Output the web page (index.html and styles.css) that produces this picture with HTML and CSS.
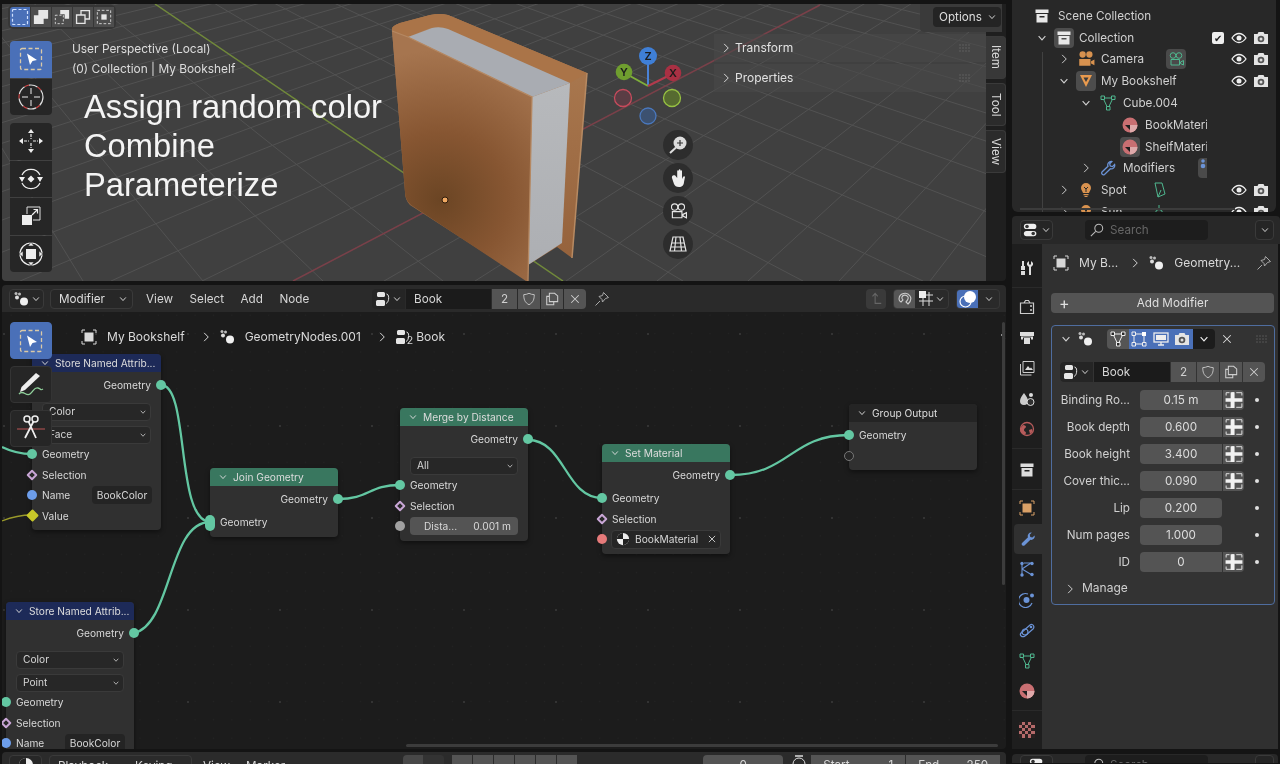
FILE: index.html
```html
<!DOCTYPE html>
<html lang="en">
<head>
<meta charset="utf-8">
<title>Blender Geometry Nodes</title>
<link rel="stylesheet" href="styles.css">
</head>
<body>
<svg class="defs" width="0" height="0" aria-hidden="true">
  <defs>
    <symbol id="down" viewBox="0 0 16 16"><path d="M3.5 5.5 8 10.5l4.5-5" fill="none" stroke="currentColor" stroke-width="1.5"/></symbol>
    <symbol id="right" viewBox="0 0 16 16"><path d="M5.5 2.5 11 8l-5.5 5.5" fill="none" stroke="currentColor" stroke-width="1.3"/></symbol>
    <symbol id="cross" viewBox="0 0 16 16"><path d="M3 3l10 10M13 3 3 13" fill="none" stroke="currentColor" stroke-width="1.4"/></symbol>
    <symbol id="object" viewBox="0 0 16 16"><path d="M1 4V1h3M12 1h3v3M15 12v3h-3M4 15H1v-3" fill="none" stroke="currentColor"/><rect x="3.5" y="3.5" width="9" height="9" fill="currentColor"/></symbol>
    <symbol id="geo" viewBox="0 0 16 16"><circle cx="3" cy="2.5" r="1.5" fill="#bbb"/><circle cx="6.5" cy="3" r="1.5" fill="#bbb"/><circle cx="4" cy="6.5" r="2" fill="#ddd"/><circle cx="11" cy="10.5" r="4" fill="#f0f0f0"/></symbol>
    <symbol id="group" viewBox="0 0 16 16"><rect x="2" y="1" width="8" height="5" rx="1.5" fill="#e6e6e6"/><rect x="1" y="9" width="9" height="6" rx="1.5" fill="#e6e6e6"/><path d="M11.5 3c3 0 3 8-.5 9.5" fill="none" stroke="#e6e6e6"/></symbol>
    <symbol id="shield" viewBox="0 0 16 16"><path d="M8 1.5c2 1 4 1.5 6 1.500 0 5-1 9-6 11.500C3 12 2 8 2 3c2 0 4-.5 6-1.500z" fill="none" stroke="currentColor"/></symbol>
    <symbol id="copy" viewBox="0 0 16 16"><path d="M5 1.5h6l3.5 3V11H5zM5 5H2v9.500h8V11" fill="none" stroke="currentColor" stroke-width="1.200"/></symbol>
    <symbol id="pin" viewBox="0 0 16 16"><path d="M9.5 1.5 14.5 6.500 11.500 7.500 8.500 11 8 8.500 5 5.500 8.500 4.500zM6 10l-4.500 4.500" fill="none" stroke="currentColor"/></symbol>
    <symbol id="box" viewBox="0 0 16 16"><path d="M1.5 1.5h13V5h-13zM2.500 6h11v8.500h-11zM5.500 8v1.500h5V8z" fill="currentColor" fill-rule="evenodd"/></symbol>
    <symbol id="eye" viewBox="0 0 16 16"><path d="M1 8s3-4.500 7-4.500S15 8 15 8s-3 4.500-7 4.500S1 8 1 8z" fill="none" stroke="#eee" stroke-width="1.300"/><circle cx="8" cy="8" r="2.500" fill="#eee"/></symbol>
    <symbol id="render" viewBox="0 0 16 16"><path d="M1 4h3.500l1-2h5l1 2H15v10H1z" fill="#e4e4e4"/><circle cx="8" cy="9" r="3.300" fill="#555"/><circle cx="8" cy="9" r="1.500" fill="#ddd"/></symbol>
    <symbol id="camera" viewBox="0 0 16 16"><circle cx="5" cy="4" r="2.800" fill="currentColor"/><circle cx="11" cy="4" r="2.800" fill="currentColor"/><path d="M2 8h10v6H2zM12.500 10l3-1.500v5l-3-1.500z" fill="currentColor"/></symbol>
    <symbol id="camline" viewBox="0 0 16 16"><circle cx="5" cy="4.500" r="2.800" fill="none" stroke="currentColor"/><circle cx="11" cy="4.500" r="2.800" fill="none" stroke="currentColor"/><path d="M3 8.500h8.500V14H3zM12.500 11l3-1.500V14l-3-1.500z" fill="none" stroke="currentColor"/></symbol>
    <symbol id="mesh" viewBox="0 0 16 16"><path d="M3 3h10L8.500 12.500h-1z" fill="none" stroke="currentColor"/><path d="M1 1h3.500v3.500H1zM11.500 1H15v3.500h-3.500zM6.500 11.500H10V15H6.500z" fill="#282828" stroke="currentColor"/></symbol>
    <symbol id="mat" viewBox="0 0 16 16"><circle cx="8" cy="8" r="7.500" fill="#c96f72"/><path d="M8 8h7.500A7.500 7.500 0 0 1 8 15.500z" fill="#dfa9aa"/><path d="M3 8h5v5z" fill="#1f1f1f"/></symbol>
    <symbol id="matw" viewBox="0 0 16 16"><circle cx="8" cy="8" r="7" fill="#eee"/><path d="M8 8h7a7 7 0 0 1-7 7zM8 8V1a7 7 0 0 0-7 7z" fill="#222"/></symbol>
    <symbol id="wrench" viewBox="0 0 16 16"><path d="M11.5 1.500A3.500 3.500 0 0 0 8 6.300L2 12a1.800 1.800 0 0 0 2.500 2.500l5.900-5.700a3.500 3.500 0 0 0 4.200-4.300L12.400 6.600 10.300 6l-.6-2.200 2.100-2.200z" fill="none" stroke="currentColor" stroke-width="1.300"/></symbol>
    <symbol id="wrenchf" viewBox="0 0 16 16"><path d="M11.5 1.500A3.500 3.500 0 0 0 8 6.300L2 12a1.800 1.800 0 0 0 2.500 2.500l5.900-5.700a3.500 3.500 0 0 0 4.200-4.300L12.400 6.600 10.300 6l-.6-2.200 2.100-2.200z" fill="currentColor"/></symbol>
    <symbol id="bulb" viewBox="0 0 16 16"><path d="M3 6a5 5 0 0 1 10 0c0 2-1.500 3-2 5H5c-.5-2-2-3-2-5z" fill="currentColor"/><path d="M5.5 12h5v1.300h-5zM6.500 14h3v1h-3z" fill="currentColor"/><path d="M6 5l2 2 2-2M8 7v3" stroke="#282828" fill="none"/></symbol>
    <symbol id="attr" viewBox="0 0 16 16"><path d="M1 4V1.500h3M6 1.500h2M10 1.500h5V4M15 11v3.500h-5M6 14.500H1V12" fill="none" stroke="#eee" stroke-width=".8"/><path d="M.5 6.500H5V1h3.500v5.500h7v3h-7V15H5V9.500H.5z" fill="#f2f2f2"/></symbol>
    <symbol id="grip" viewBox="0 0 12 8"><path d="M.5 1h11M.5 4h11M.5 7h11" stroke="#777" stroke-dasharray="1 2" fill="none"/></symbol>
    <symbol id="select" viewBox="0 0 24 24"><rect x="1.500" y="1.500" width="21" height="21" rx="1.500" fill="none" stroke="currentColor" stroke-width="1.300" stroke-dasharray="4 2.500"/><path d="M8 6.500 18 13l-4.500 1L11 18z" fill="#fff"/></symbol>
    <symbol id="cursor" viewBox="0 0 26 26"><circle cx="13" cy="13" r="12" fill="none" stroke="#ddd" stroke-width="1.200" stroke-dasharray="9 4.500"/><circle cx="13" cy="13" r="12" fill="none" stroke="#c44" stroke-width="1.200" stroke-dasharray="4.500 9" stroke-dashoffset="-9"/><path d="M13 4v6M13 16v6M4 13h6M16 13h6" stroke="#eee"/></symbol>
    <symbol id="move" viewBox="0 0 26 26"><path d="M13 1l3 4h-6zM13 25l-3-4h6zM1 13l4-3v6zM25 13l-4 3v-6z" fill="#eee"/><path d="M13 6v5M13 15v5M6 13h5M15 13h5" stroke="#eee" stroke-width="1.200" stroke-dasharray="3 1"/></symbol>
    <symbol id="rotate" viewBox="0 0 26 26"><path d="M4 9a10 10 0 0 1 18 0M22 17a10 10 0 0 1-18 0" fill="none" stroke="#eee" stroke-width="1.200"/><path d="M13 9.500l3.500 3.500-3.500 3.500L9.500 13zM1 11h6l-3 5zM25 11h-6l3 5z" fill="#eee"/></symbol>
    <symbol id="scale" viewBox="0 0 22 22"><rect x="2" y="10" width="10" height="10" fill="#eee"/><path d="M7 9V2h13v13h-7" fill="none" stroke="#ddd"/><path d="M12 10l5-5M13.500 4.500h4v4" fill="none" stroke="#eee" stroke-width="1.200"/></symbol>
    <symbol id="xform" viewBox="0 0 26 26"><circle cx="13" cy="13" r="11" fill="none" stroke="#eee" stroke-width="1.200"/><rect x="8" y="8" width="10" height="10" fill="#eee"/><path d="M13 1l3 4h-6zM13 25l-3-4h6zM1 13l4-3v6zM25 13l-4 3v-6z" fill="#eee" stroke="#262626" stroke-width=".6"/></symbol>
    <symbol id="annot" viewBox="0 0 30 30"><path d="M20 3l4 3L9 20l-5 2 1.500-5z" fill="#eee"/><path d="M3 24c4-5 7 3 11 0s4-7 8-6 2 3 5 1" fill="none" stroke="#8fcf9a" stroke-width="1.300"/></symbol>
    <symbol id="cut" viewBox="0 0 30 30"><path d="M1 15h28" stroke="#b55" stroke-width="1.200"/><circle cx="11" cy="5" r="3" fill="none" stroke="#eee" stroke-width="1.500"/><circle cx="19" cy="5" r="3" fill="none" stroke="#eee" stroke-width="1.500"/><path d="M12.500 7.500 20 24M17.500 7.500 9 24" stroke="#eee" stroke-width="1.800"/></symbol>
    <symbol id="zoomin" viewBox="0 0 20 20"><circle cx="12" cy="8" r="6.500" fill="#ddd"/><path d="M12 5v6M9 8h6" stroke="#333" stroke-width="1.200"/><path d="M8 12.500 2 18" stroke="#ddd" stroke-width="2"/></symbol>
    <symbol id="hand" viewBox="0 0 20 20"><path d="M4 10l2 6c1 2 2 3 5 3s5-2 5-5l1-5c0-1-1.500-1-2 0l-1 2V3c0-1-1.500-1-1.500 0v4V2c0-1-1.700-1-1.700 0v5.500V3c0-1-1.600-1-1.600 0v7l-2-2.500C4.500 6.500 3.500 8.500 4 10z" fill="#eee"/></symbol>
    <symbol id="persp" viewBox="0 0 20 20"><path d="M5 3h10l3 14H2zM3.500 9h13M2.500 13h15M8 3 6.500 17M12 3l1.500 14" fill="none" stroke="#e4e4e4" stroke-width="1.200"/></symbol>
    <symbol id="search" viewBox="0 0 16 16"><circle cx="10" cy="6" r="4.500" fill="none" stroke="currentColor" stroke-width="1.200"/><path d="M6.500 9.500 1 15" stroke="currentColor" stroke-width="1.200"/></symbol>
    <symbol id="editor" viewBox="0 0 18 16"><rect x="1" y="1" width="14" height="6" rx="3" fill="#eee"/><rect x="1" y="9" width="14" height="6" rx="3" fill="#eee"/><circle cx="4.500" cy="4" r="2" fill="#333"/><circle cx="11.500" cy="12" r="2" fill="#333"/></symbol>
    <symbol id="tools" viewBox="0 0 16 16"><path d="M3 1h2v5h1v4H2V6h1zM2 11h4v4H2zM10 1v3l1 1 1-1V1l2 2v2l-2 2v8h-2V7L8 5V3z" fill="#ddd"/></symbol>
    <symbol id="tv" viewBox="0 0 16 16"><path d="M1.500 4h13v10.500h-13zM5 4l1.500-2.500h3L11 4" fill="none" stroke="#ccc" stroke-width="1.200"/><circle cx="12" cy="7" r="1" fill="#ccc"/><circle cx="12" cy="11" r="1" fill="#ccc"/></symbol>
    <symbol id="printer" viewBox="0 0 16 16"><path d="M1 2h14v4H1zM2 6.500h12v3h-2v-2H4v2H2zM5 8h6v6H5z" fill="#ddd"/></symbol>
    <symbol id="images" viewBox="0 0 16 16"><path d="M1.500 4v11h11M4 1.500h11v11H4z" fill="none" stroke="#ccc"/><path d="M6 10l3-4 2 2.500 1-1 2 2.500z" fill="#ddd"/></symbol>
    <symbol id="scene" viewBox="0 0 16 16"><path d="M5 2c3 4 4 6 4 8a4 4 0 0 1-8 0c0-3 2-5 4-8z" fill="#ccc"/><circle cx="12" cy="4" r="2" fill="#ddd"/><circle cx="11.500" cy="11" r="3.500" fill="#303030" stroke="#ddd"/></symbol>
    <symbol id="world" viewBox="0 0 16 16"><circle cx="8" cy="8" r="6.500" fill="#232323" stroke="#b75b5b" stroke-width="1.300"/><path d="M4 4c2 0 3 1 3 2S5 7 5 9s2 1 2 3l-1 2c-3-1-5-3-5-6zM10 9l3-1c1 2 0 4-2 5z" fill="#b75b5b"/></symbol>
    <symbol id="objtab" viewBox="0 0 16 16"><path d="M1 4V1h3M12 1h3v3M15 12v3h-3M4 15H1v-3" fill="none" stroke="#d9a066"/><rect x="3.500" y="3.500" width="9" height="9" fill="#d9a066"/></symbol>
    <symbol id="particles" viewBox="0 0 16 16"><path d="M3 2v12M3 8l9-6M3 8l10 6M5 2h8" stroke="#6b93d6" stroke-width="1.100" fill="none"/><circle cx="3" cy="2.500" r="1.700" fill="#6b93d6"/><circle cx="13" cy="2.500" r="1.700" fill="#6b93d6"/><circle cx="3" cy="14" r="1.700" fill="#6b93d6"/><circle cx="13" cy="13.500" r="1.700" fill="#6b93d6"/></symbol>
    <symbol id="physics" viewBox="0 0 16 16"><path d="M13 11a7 7 0 1 1-4-9" fill="none" stroke="#6b93d6" stroke-width="1.200"/><circle cx="7.500" cy="8" r="3" fill="#6b93d6"/><circle cx="13" cy="3.500" r="2" fill="#6b93d6"/></symbol>
    <symbol id="constraint" viewBox="0 0 16 16"><path d="M2 11 11 3c3-2 5 2 3 4l-8 7c-3 2-6-1-4-3z" fill="none" stroke="#6b93d6" stroke-width="1.200"/><circle cx="6" cy="10" r="3" fill="none" stroke="#6b93d6" stroke-width="1.200"/><circle cx="12" cy="5" r="1.300" fill="#6b93d6"/></symbol>
    <symbol id="checker" viewBox="0 0 16 16"><rect width="16" height="16" fill="#b56a6a"/><path d="M0 0h3v3H0zM6 0h3v3H6zM12 0h4v3h-4zM3 3h3v3H3zM9 3h3v3H9zM0 6h3v3H0zM6 6h3v3H6zM12 6h4v3h-4zM3 9h3v3H3zM9 9h3v3H9zM0 12h3v4H0zM6 12h3v4H6zM12 12h4v4h-4z" fill="#2a2020"/></symbol>
    <symbol id="modes" viewBox="0 0 18 18"><rect x="1.500" y="1.500" width="15" height="15" rx="1" fill="none" stroke="currentColor" stroke-width="1.200" stroke-dasharray="3 2"/></symbol>
    <symbol id="editm" viewBox="0 0 16 16"><path d="M3 3h10v10H3z" fill="none" stroke="#eee"/><path d="M1 1h3.500v3.500H1zM1 11.500h3.500V15H1zM11.500 11.500H15V15h-3.500z" fill="#4a70b8" stroke="#eee"/><rect x="11" y="1" width="4" height="4" fill="#fff"/></symbol>
    <symbol id="m2" viewBox="0 0 18 18"><path d="M1 7h5V1h11v10h-5v6H1z" fill="#e6e6e6"/></symbol>
    <symbol id="m3" viewBox="0 0 18 18"><path d="M7 1h10v10h-5V6H7z" fill="#e6e6e6"/><path d="M1.500 7h9v9.500h-9z" fill="none" stroke="#ddd" stroke-dasharray="2.500 2"/></symbol>
    <symbol id="m4" viewBox="0 0 18 18"><path d="M1 6h5V1h11v11h-5v5H1zM7.500 2.500V6H12v4.500h3.500v-8zM2.500 7.500v8h8v-8z" fill="#e6e6e6" fill-rule="evenodd"/></symbol>
    <symbol id="m5" viewBox="0 0 18 18"><rect x="1.500" y="1.500" width="15" height="15" fill="none" stroke="#ddd" stroke-dasharray="3 2"/><rect x="6" y="6" width="6" height="6" fill="#e6e6e6"/></symbol>
    <symbol id="parent" viewBox="0 0 16 16"><path d="M7 2v11h7M4 5l3-3.500L10 5" fill="none" stroke="#666" stroke-width="1.200"/></symbol>
    <symbol id="magnet" viewBox="0 0 16 16"><path d="M2 8a6 6 0 0 1 11-3c2 3 0 6-2 8l-2-2c1-1 3-3 2-5S6 3 5 6c-.5 1.500.5 2 1 3l-2 2C3 10.500 2 9.500 2 8z" fill="none" stroke="#ccc" stroke-width="1.100"/></symbol>
    <symbol id="snapgrid" viewBox="0 0 16 16"><path d="M1 4h14M1 10h14M5 1v14M11 1v14" stroke="#ddd"/><rect x="1" y="0" width="7" height="7" fill="#eee"/></symbol>
    <symbol id="overlay" viewBox="0 0 18 18"><circle cx="11" cy="7" r="6" fill="#fff"/><circle cx="6.500" cy="11.500" r="5.500" fill="none" stroke="#fff" stroke-width="1.200"/></symbol>
    <symbol id="clock" viewBox="0 0 16 16"><circle cx="8" cy="9" r="6" fill="none" stroke="#ddd"/><path d="M4 1h8" stroke="#ddd" stroke-width="1.500"/></symbol>
    <symbol id="spot" viewBox="0 0 16 16"><path d="M4 1h7l3 11-7 3zM7 15l3-7" fill="none" stroke="currentColor"/></symbol>
    <symbol id="sun" viewBox="0 0 16 16"><circle cx="8" cy="9" r="3.500" fill="none" stroke="currentColor"/><path d="M8 1v3M1 9h3M12 9h3M3 4l2 2M13 4l-2 2M3 14l2-2M13 14l-2-2" stroke="currentColor"/></symbol>
    <symbol id="ortri" viewBox="0 0 16 16"><path d="M2 2h12L8 14z" fill="#e99a4e"/><path d="M5.500 4.500h5L8 9z" fill="#3a3a3a"/></symbol>
    <symbol id="modblue" viewBox="0 0 8 16"><circle cx="5" cy="3" r="1.800" fill="#6b93d6"/><circle cx="5" cy="8" r="2.300" fill="#6b93d6"/></symbol>
    <symbol id="tvm" viewBox="0 0 16 16"><rect x="1" y="2" width="14" height="9" fill="none" stroke="currentColor" stroke-width="1.300"/><rect x="3" y="4" width="10" height="5" fill="currentColor"/><path d="M8 11v3M5 14h6" stroke="currentColor" stroke-width="1.300"/></symbol>
  </defs>
</svg>

<div class="app">
  <div class="main">

    <section class="viewport">
      <div class="view3d">
        <svg class="scene" viewBox="2 4 984 277" preserveAspectRatio="none">
          <defs>
            <radialGradient id="front" gradientUnits="userSpaceOnUse" cx="440" cy="200" r="150"><stop offset="0" stop-color="#6b4524"/><stop offset=".45" stop-color="#875632"/><stop offset="1" stop-color="#a6754f"/></radialGradient>
            <linearGradient id="back" x1="0" y1="0" x2="0" y2="1"><stop offset="0" stop-color="#ae7d53"/><stop offset="1" stop-color="#93603a"/></linearGradient>
            <linearGradient id="pages" x1="0" y1="0" x2="0" y2="1"><stop offset="0" stop-color="#b7b9bc"/><stop offset="1" stop-color="#adafb3"/></linearGradient>
          </defs>
          <rect x="2" y="4" width="984" height="277" fill="#404040"/>
          <path class="grid" d="M1370 -288L-1527 281M1370 -288L-1436 281M1370 -288L-1345 281M1370 -288L-1254 281M1370 -288L-1163 281M1370 -288L-1072 281M1370 -288L-981 281M1370 -288L-890 281M1370 -288L-799 281M1370 -288L-708 281M1370 -288L-617 281M1370 -288L-526 281M1370 -288L-435 281M1370 -288L-344 281M1370 -288L-253 281M1370 -288L-162 281M1370 -288L-71 281M1370 -288L20 281M1370 -288L111 281M1370 -288L202 281M1370 -288L384 281M1370 -288L475 281M1370 -288L566 281M1370 -288L657 281M1370 -288L748 281M1370 -288L839 281M1370 -288L930 281M1370 -288L1021 281M1370 -288L1112 281M1370 -288L1203 281M1370 -288L1294 281"/>
          <path class="grid" d="M-257 -276L-37 281M-257 -276L83 281M-257 -276L203 281M-257 -276L323 281M-257 -276L443 281M-257 -276L683 281M-257 -276L803 281M-257 -276L923 281M-257 -276L1043 281M-257 -276L1163 281M-257 -276L1283 281M-257 -276L1403 281M-257 -276L1523 281M-257 -276L1643 281M-257 -276L1763 281M-257 -276L1883 281M-257 -276L2003 281M-257 -276L2123 281M-257 -276L2243 281M-257 -276L2363 281"/>
          <path class="axis-red" d="M293 281 820 5"/>
          <path class="axis-green" d="M155 4 563 281"/>
          <path d="M392 30Q391 26 400 23L430 15Q440 13 448 15L587 73 572 258 557 247 528 265 528 281 410 205Q405 200 405 192z" fill="url(#back)"/>
          <path d="M392 30Q391 26 400 23L430 15Q440 13 448 15L587 73 570 83 448 29Q440 26 430 28L408 37z" fill="#aa7448"/>
          <path d="M408 37 432 28Q440 26 448 29L570 83 532 97z" fill="#a9acb2"/>
          <path d="M532 97 570 83 562 243 528 265z" fill="url(#pages)"/>
          <path d="M392 30 408 37 532 97 528 281 526 281 411 205Q405 200 405 192z" fill="url(#front)"/>
          <path d="M392 31 408 37 532 97 528 281" stroke="#b58862" stroke-width="1.300" fill="none"/>
          <path d="M587 73 572 258" stroke="#b78a62" stroke-width="1.500" fill="none"/>
          <circle cx="445" cy="200" r="3" fill="#f0a862" stroke="#2e1c0c"/>
          <path d="M648 86V62" stroke="#4a82d6" stroke-width="2"/>
          <path d="M648 86 630 76" stroke="#7fae3a" stroke-width="2"/>
          <path d="M648 86 668 76" stroke="#b23a4c" stroke-width="2"/>
          <circle cx="623" cy="98" r="8.500" fill="#5a3d44" stroke="#c74b5c" stroke-width="1.300"/>
          <circle cx="672" cy="98" r="8.500" fill="#566a30" stroke="#96c042" stroke-width="1.300"/>
          <circle cx="648" cy="116" r="8" fill="#3c5170" stroke="#4a78bd" stroke-width="1.300"/>
          <circle cx="648" cy="56" r="9" fill="#3f7fd6"/>
          <circle cx="624" cy="72" r="8.300" fill="#6f9e2f"/>
          <circle cx="673" cy="73" r="8.300" fill="#a93043"/>
          <text class="gz" x="648" y="60">Z</text><text class="gz" x="624" y="76">Y</text><text class="gz" x="673" y="77">X</text>
        </svg>

        <div class="selmodes">
          <span class="smode active"><svg class="i18"><use href="#modes"/></svg></span>
          <span class="smode"><svg class="i16"><use href="#m2"/></svg></span>
          <span class="smode"><svg class="i16"><use href="#m3"/></svg></span>
          <span class="smode"><svg class="i16"><use href="#m4"/></svg></span>
          <span class="smode"><svg class="i16"><use href="#m5"/></svg></span>
        </div>

        <div class="tools3d">
          <div class="tbgroup">
            <span class="tool active"><svg class="i24 tan"><use href="#select"/></svg></span>
            <span class="tool"><svg class="i26"><use href="#cursor"/></svg></span>
          </div>
          <div class="tbgroup">
            <span class="tool"><svg class="i26"><use href="#move"/></svg></span>
            <span class="tool"><svg class="i26"><use href="#rotate"/></svg></span>
            <span class="tool"><svg class="i22"><use href="#scale"/></svg></span>
            <span class="tool"><svg class="i26"><use href="#xform"/></svg></span>
          </div>
        </div>

        <div class="viewinfo">
          <div>User Perspective (Local)</div>
          <div>(0) Collection | My Bookshelf</div>
        </div>
        <div class="bigtext">
          <div>Assign random color</div>
          <div>Combine</div>
          <div>Parameterize</div>
        </div>

        <div class="navbtns">
          <span class="nav"><svg class="i20"><use href="#zoomin"/></svg></span>
          <span class="nav"><svg class="i20"><use href="#hand"/></svg></span>
          <span class="nav"><svg class="i18 light"><use href="#camline"/></svg></span>
          <span class="nav"><svg class="i20"><use href="#persp"/></svg></span>
        </div>

        <div class="npanels">
          <div class="npanel"><svg class="i12 chev"><use href="#right"/></svg><span>Transform</span><svg class="grip"><use href="#grip"/></svg></div>
          <div class="npanel"><svg class="i12 chev"><use href="#right"/></svg><span>Properties</span><svg class="grip"><use href="#grip"/></svg></div>
        </div>
      </div>
      <div class="options"><span class="optbtn">Options <svg class="i10"><use href="#down"/></svg></span></div>
      <div class="vtabs">
        <span class="vtab sel">Item</span>
        <span class="vtab">Tool</span>
        <span class="vtab">View</span>
      </div>
    </section>

    <section class="editor">
      <header class="edhead">
        <span class="dd type"><svg class="i16"><use href="#geo"/></svg><svg class="i10"><use href="#down"/></svg></span>
        <span class="dd mode"><span>Modifier</span><svg class="i10"><use href="#down"/></svg></span>
        <nav class="menu"><span>View</span><span>Select</span><span>Add</span><span>Node</span></nav>
        <div class="ngroup wide">
          <span class="ng-type"><svg class="i16"><use href="#group"/></svg><svg class="i10"><use href="#down"/></svg></span>
          <span class="ng-name">Book</span><span class="ng-btn num">2</span>
          <span class="ng-btn"><svg class="i14"><use href="#shield"/></svg></span>
          <span class="ng-btn"><svg class="i14"><use href="#copy"/></svg></span>
          <span class="ng-btn"><svg class="i12"><use href="#cross"/></svg></span>
        </div>
        <svg class="i16 pinicon"><use href="#pin"/></svg>
        <div class="edright">
          <span class="hbtn off"><svg class="i14"><use href="#parent"/></svg></span>
          <span class="hgroup"><span class="hseg on"><svg class="i16"><use href="#magnet"/></svg></span><span class="hseg wide2"><svg class="i16"><use href="#snapgrid"/></svg><svg class="i10"><use href="#down"/></svg></span></span>
          <span class="hgroup"><span class="hseg blue"><svg class="i18"><use href="#overlay"/></svg></span><span class="hseg narrow"><svg class="i10"><use href="#down"/></svg></span></span>
        </div>
      </header>

      <div class="canvas">
        <svg class="links" viewBox="2 312 1004 437">
          <path d="M161 385C190 385 175 520 210 522"/>
          <path d="M134 633C172 625 168 522 210 522"/>
          <path d="M338 499C369 499 369 485 400 485"/>
          <path d="M528 440C565 440 565 498 602 498"/>
          <path d="M730 475C790 475 790 435 849 435"/>
          <path d="M2 447C12 452 20 454 32 454"/>
          <path class="yellow" d="M2 521C12 517 20 515 32 515"/>
        </svg>

        <article class="node n1">
          <h4 class="nhead blue-h"><svg class="i10"><use href="#down"/></svg>Store Named Attrib...</h4>
          <div class="nbody">
            <div class="nrow out">Geometry<i class="sk geo"></i></div>
            <div class="dds"><span class="ndd">Color<svg class="i8"><use href="#down"/></svg></span><span class="ndd">Face<svg class="i8"><use href="#down"/></svg></span></div>
            <div class="nrow"><i class="sk geo left"></i>Geometry</div>
            <div class="nrow"><i class="sk sel left"></i>Selection</div>
            <div class="nrow"><i class="sk str left"></i>Name<span class="ninput">BookColor</span></div>
            <div class="nrow"><i class="sk val left"></i>Value</div>
          </div>
        </article>

        <article class="node n2">
          <h4 class="nhead green-h"><svg class="i10"><use href="#down"/></svg>Join Geometry</h4>
          <div class="nbody">
            <div class="nrow out">Geometry<i class="sk geo"></i></div>
            <div class="nrow sp"><i class="sk multi"></i>Geometry</div>
          </div>
        </article>

        <article class="node n3">
          <h4 class="nhead green-h"><svg class="i10"><use href="#down"/></svg>Merge by Distance</h4>
          <div class="nbody">
            <div class="nrow out">Geometry<i class="sk geo"></i></div>
            <div class="dds"><span class="ndd">All<svg class="i8"><use href="#down"/></svg></span></div>
            <div class="nrow"><i class="sk geo left"></i>Geometry</div>
            <div class="nrow"><i class="sk sel left"></i>Selection</div>
            <div class="nrow"><i class="sk grey left"></i><span class="nfield"><span>Dista...</span><span>0.001 m</span></span></div>
          </div>
        </article>

        <article class="node n4">
          <h4 class="nhead green-h"><svg class="i10"><use href="#down"/></svg>Set Material</h4>
          <div class="nbody">
            <div class="nrow out">Geometry<i class="sk geo"></i></div>
            <div class="nrow sp"><i class="sk geo left"></i>Geometry</div>
            <div class="nrow"><i class="sk sel left"></i>Selection</div>
            <div class="nrow"><i class="sk matl left"></i><span class="nmat"><svg class="i14"><use href="#matw"/></svg><span>BookMaterial</span><svg class="i10"><use href="#cross"/></svg></span></div>
          </div>
        </article>

        <article class="node n5">
          <h4 class="nhead dark-h"><svg class="i10"><use href="#down"/></svg>Group Output</h4>
          <div class="nbody">
            <div class="nrow"><i class="sk geo left"></i>Geometry</div>
            <div class="nrow"><i class="sk empty left"></i></div>
          </div>
        </article>

        <article class="node n6">
          <h4 class="nhead blue-h"><svg class="i10"><use href="#down"/></svg>Store Named Attrib...</h4>
          <div class="nbody">
            <div class="nrow out">Geometry<i class="sk geo"></i></div>
            <div class="dds"><span class="ndd">Color<svg class="i8"><use href="#down"/></svg></span><span class="ndd">Point<svg class="i8"><use href="#down"/></svg></span></div>
            <div class="nrow"><i class="sk geo left"></i>Geometry</div>
            <div class="nrow"><i class="sk sel left"></i>Selection</div>
            <div class="nrow"><i class="sk str left"></i>Name<span class="ninput">BookColor</span></div>
          </div>
        </article>

        <div class="crumbs">
          <svg class="i16"><use href="#object"/></svg><span>My Bookshelf</span>
          <svg class="i12 sepc"><use href="#right"/></svg>
          <svg class="i16"><use href="#geo"/></svg><span>GeometryNodes.001</span>
          <svg class="i12 sepc"><use href="#right"/></svg>
          <svg class="i16"><use href="#group"/></svg><sub>2</sub><span>Book</span>
        </div>

        <div class="tools2d">
          <span class="tool solo active"><svg class="i24 tan"><use href="#select"/></svg></span>
          <span class="tool solo"><svg class="i30"><use href="#annot"/></svg></span>
          <span class="tool solo"><svg class="i30"><use href="#cut"/></svg></span>
        </div>

        <svg class="i10 collapse"><use href="#right"/></svg>
        <span class="vscroll"></span>
        <span class="hscroll"></span>
      </div>
    </section>

    <footer class="timeline">
      <span class="dd tl-type"><svg class="i16"><use href="#matw"/></svg></span>
      <span class="tl-group"><span>Playback</span><span>Keying</span></span>
      <span class="tl-menu">View</span><span class="tl-menu">Marker</span>
      <span class="tl-rec"></span>
      <span class="tl-play"><i></i><i></i><i></i><i></i><i></i><i></i></span>
      <span class="tl-frame">0</span>
      <svg class="i16 tl-clock"><use href="#clock"/></svg>
      <span class="tl-range"><span>Start</span><b>1</b></span><span class="tl-range"><span>End</span><b>250</b></span>
    </footer>
  </div>

  <aside class="side">
    <section class="outliner">
      <div class="orow l0"><svg class="i16 w"><use href="#box"/></svg><span>Scene Collection</span></div>
      <div class="orow l1"><svg class="i12 exp"><use href="#down"/></svg><span class="oi hl"><svg class="i16 w"><use href="#box"/></svg></span><span>Collection</span><span class="rt"><span class="chk">✔</span><svg class="i16"><use href="#eye"/></svg><svg class="i16"><use href="#render"/></svg></span></div>
      <div class="orow l2"><svg class="i12 exp"><use href="#right"/></svg><span class="oi"><svg class="i18 cam"><use href="#camera"/></svg></span><span class="oname">Camera</span><span class="oi chip"><svg class="i16 grn"><use href="#camline"/></svg></span><span class="rt"><svg class="i16"><use href="#eye"/></svg><svg class="i16"><use href="#render"/></svg></span></div>
      <div class="orow l2"><svg class="i12 exp"><use href="#down"/></svg><span class="oi hl"><svg class="i16"><use href="#ortri"/></svg></span><span>My Bookshelf</span><span class="rt"><svg class="i16"><use href="#eye"/></svg><svg class="i16"><use href="#render"/></svg></span></div>
      <div class="orow l3"><svg class="i12 exp"><use href="#down"/></svg><span class="oi"><svg class="i16 grn"><use href="#mesh"/></svg></span><span>Cube.004</span></div>
      <div class="orow l4"><span class="oi"><svg class="i16"><use href="#mat"/></svg></span><span class="clip">BookMateri</span></div>
      <div class="orow l4"><span class="oi hl"><svg class="i16"><use href="#mat"/></svg></span><span class="clip">ShelfMateri</span></div>
      <div class="orow l3"><svg class="i12 exp"><use href="#right"/></svg><span class="oi"><svg class="i16 blu"><use href="#wrench"/></svg></span><span class="oname2">Modifiers</span><span class="modchip"><svg class="i16m"><use href="#modblue"/></svg></span></div>
      <div class="orow l2"><svg class="i12 exp"><use href="#right"/></svg><span class="oi"><svg class="i16 cam"><use href="#bulb"/></svg></span><span class="oname3">Spot</span><span class="oi"><svg class="i16 grn"><use href="#spot"/></svg></span><span class="rt"><svg class="i16"><use href="#eye"/></svg><svg class="i16"><use href="#render"/></svg></span></div>
      <div class="orow l2"><svg class="i12 exp"><use href="#right"/></svg><span class="oi"><svg class="i16 cam"><use href="#bulb"/></svg></span><span class="oname3">Sun</span><span class="oi"><svg class="i16 grn"><use href="#sun"/></svg></span><span class="rt"><svg class="i16"><use href="#eye"/></svg><svg class="i16"><use href="#render"/></svg></span></div>
      <i class="treeline"></i>
      <i class="oscroll"></i>
    </section>

    <header class="phead">
      <span class="dd ptype"><svg class="i16"><use href="#editor"/></svg><svg class="i10"><use href="#down"/></svg></span>
      <span class="psearch"><svg class="i14"><use href="#search"/></svg><span>Search</span></span>
      <span class="dd pfilter"><svg class="i10"><use href="#down"/></svg></span>
    </header>

    <section class="props">
      <nav class="ptabs">
        <div class="ptgroup"><svg class="i16"><use href="#tools"/></svg></div>
        <div class="ptgroup"><svg class="i16"><use href="#tv"/></svg><svg class="i16"><use href="#printer"/></svg><svg class="i16"><use href="#images"/></svg><svg class="i16"><use href="#scene"/></svg><svg class="i16"><use href="#world"/></svg></div>
        <div class="ptgroup third"><svg class="i16"><use href="#box"/></svg></div>
        <div class="ptgroup">
          <svg class="i16"><use href="#objtab"/></svg>
          <span class="ptab-on"><svg class="i16 blu"><use href="#wrenchf"/></svg></span>
          <svg class="i16"><use href="#particles"/></svg><svg class="i16"><use href="#physics"/></svg><svg class="i16"><use href="#constraint"/></svg>
          <svg class="i16 grn"><use href="#mesh"/></svg><svg class="i16"><use href="#mat"/></svg>
        </div>
        <div class="ptgroup"><svg class="i16"><use href="#checker"/></svg></div>
      </nav>
      <div class="pmain">
        <div class="pcrumb">
          <svg class="i16"><use href="#object"/></svg><span>My B...</span><svg class="i12 sepc"><use href="#right"/></svg>
          <svg class="i16"><use href="#geo"/></svg><span>Geometry...</span><svg class="i16 pinr"><use href="#pin"/></svg>
        </div>
        <div class="addmod"><span class="plus">+</span><span>Add Modifier</span></div>
        <div class="modpanel">
          <div class="modhead">
            <svg class="i12 exp"><use href="#down"/></svg>
            <svg class="i16"><use href="#geo"/></svg>
            <span class="mbtns">
              <span class="mb"><svg class="i16 lite"><use href="#mesh"/></svg></span>
              <span class="mb b"><svg class="i16"><use href="#editm"/></svg></span>
              <span class="mb b"><svg class="i16 lite"><use href="#tvm"/></svg></span>
              <span class="mb b"><svg class="i16"><use href="#render"/></svg></span>
              <span class="mb d"><svg class="i12"><use href="#down"/></svg></span>
            </span>
            <svg class="i12 mx"><use href="#cross"/></svg>
            <svg class="grip"><use href="#grip"/></svg>
          </div>
          <div class="ngroup">
            <span class="ng-type"><svg class="i16"><use href="#group"/></svg><svg class="i10"><use href="#down"/></svg></span>
            <span class="ng-name">Book</span><span class="ng-btn num">2</span>
            <span class="ng-btn"><svg class="i14"><use href="#shield"/></svg></span>
            <span class="ng-btn"><svg class="i14"><use href="#copy"/></svg></span>
            <span class="ng-btn"><svg class="i12"><use href="#cross"/></svg></span>
          </div>
          <div class="mprops">
            <div class="mrow"><label>Binding Ro...</label><span class="mfield">0.15 m</span><span class="mattr"><svg class="i18"><use href="#attr"/></svg></span><i class="mdot"></i></div>
            <div class="mrow"><label>Book depth</label><span class="mfield">0.600</span><span class="mattr"><svg class="i18"><use href="#attr"/></svg></span><i class="mdot"></i></div>
            <div class="mrow"><label>Book height</label><span class="mfield">3.400</span><span class="mattr"><svg class="i18"><use href="#attr"/></svg></span><i class="mdot"></i></div>
            <div class="mrow"><label>Cover thic...</label><span class="mfield">0.090</span><span class="mattr"><svg class="i18"><use href="#attr"/></svg></span><i class="mdot"></i></div>
            <div class="mrow"><label>Lip</label><span class="mfield">0.200</span><span class="mattr none"></span><i class="mdot"></i></div>
            <div class="mrow"><label>Num pages</label><span class="mfield">1.000</span><span class="mattr none"></span><i class="mdot"></i></div>
            <div class="mrow"><label>ID</label><span class="mfield">0</span><span class="mattr"><svg class="i18"><use href="#attr"/></svg></span><i class="mdot"></i></div>
          </div>
          <div class="manage"><svg class="i12"><use href="#right"/></svg>Manage</div>
        </div>
      </div>
    </section>

    <footer class="pbottom">
      <span class="dd ptype"><svg class="i16"><use href="#editor"/></svg></span>
      <span class="psearch"><svg class="i14"><use href="#search"/></svg><span>Search</span></span>
      <span class="dd pfilter"></span>
    </footer>
  </aside>
</div>
</body>
</html>
```
FILE: styles.css
```css
* { box-sizing: border-box; }
html, body { margin: 0; height: 100%; background: #141414; }
body { font: 11.7px/1.2 Inter, "Noto Sans", sans-serif; color: #d6d6d6; overflow: hidden; }
svg { display: block; flex: none; }
.defs { position: absolute; }
.i8 { width: 8px; height: 8px; } .i10 { width: 10px; height: 10px; } .i12 { width: 12px; height: 12px; }
.i14 { width: 14px; height: 14px; } .i16 { width: 16px; height: 16px; } .i18 { width: 18px; height: 18px; }
.i20 { width: 20px; height: 20px; } .i22 { width: 22px; height: 22px; } .i24 { width: 24px; height: 24px; }
.i26 { width: 26px; height: 26px; } .i30 { width: 30px; height: 30px; } .i16m { width: 8px; height: 16px; }
.tan { color: #d9c9a8; } .light { color: #e6e6e6; } .w { color: #e8e8e8; } .cam { color: #d8924f; }
.grn { color: #4fb78f; } .blu { color: #6b93d6; } .lite { color: #eee; }

.app { display: flex; width: 1280px; height: 764px; overflow: hidden; background: #141414; filter: blur(.35px); }
.main { width: 1004px; margin: 0 6px 0 2px; display: flex; flex-direction: column; }

/* 3D viewport */
.viewport { position: relative; display: flex; height: 277px; margin-top: 4px; background: #1f1f1f; border-radius: 0 0 4px 4px; overflow: hidden; }
.view3d { position: relative; width: 984px; overflow: hidden; }
.scene { position: absolute; inset: 0; width: 100%; height: 100%; }
.grid { stroke: #525252; stroke-width: 1; fill: none; }
.axis-red { stroke: #7a4049; stroke-width: 1.5; fill: none; }
.axis-green { stroke: #71893a; stroke-width: 1.5; fill: none; }
.gz { font: 600 11px Inter, sans-serif; fill: #1c1c1c; text-anchor: middle; }
.selmodes { position: absolute; left: 8px; top: 3px; display: flex; gap: 1px; background: #363636; box-shadow: 0 0 0 2px #363636; border-radius: 3px; }
.smode { width: 20px; height: 20px; display: flex; align-items: center; justify-content: center; background: #4d4d4d; color: #cfe0ff; }
.smode.active { background: #4a70b8; border-radius: 3px 0 0 3px; }
.tools3d { position: absolute; left: 8px; top: 37px; display: flex; flex-direction: column; gap: 8px; }
.tbgroup { display: flex; flex-direction: column; gap: 1px; border-radius: 4px; overflow: hidden; }
.tool { width: 42px; height: 36.5px; display: flex; align-items: center; justify-content: center; background: #262626; }
.tool.active { background: #4a70b8; }
.viewinfo { position: absolute; left: 70px; top: 38px; display: flex; flex-direction: column; gap: 6px; font-size: 11.9px; color: #dcdcdc; }
.bigtext { position: absolute; left: 82px; top: 83px; font: 32.7px/39px "Liberation Sans", Arial, sans-serif; color: #f4f4f4; }
.navbtns { position: absolute; left: 661px; top: 126px; display: flex; flex-direction: column; gap: 3px; }
.nav { width: 30px; height: 30px; border-radius: 50%; background: #2d2d2d; display: flex; align-items: center; justify-content: center; }
.npanels { position: absolute; left: 712px; top: 30px; width: 272px; display: flex; flex-direction: column; gap: 2px; }
.npanel { position: relative; height: 28px; display: flex; align-items: center; padding-left: 6px; gap: 3px; background: rgba(72,72,72,.55); font-size: 12px; color: #e2e2e2; }
.chev { color: #ddd; }
.grip { width: 12px; height: 8px; position: absolute; right: 15px; top: 10px; }
.options { position: absolute; left: 918px; top: 0; width: 82px; height: 28px; background: #3a3a3a; display: flex; align-items: center; justify-content: flex-end; padding: 0 1px 2px 0; border-radius: 0 0 0 4px; }
.optbtn { width: 68px; height: 20px; background: #242424; border-radius: 4px; display: flex; align-items: center; justify-content: space-between; padding: 0 4px 0 6px; color: #ddd; }
.vtabs { width: 20px; display: flex; flex-direction: column; gap: 4px; padding-top: 32px; }
.vtab { height: 43px; background: #2b2b2b; writing-mode: vertical-rl; display: flex; align-items: center; justify-content: center; font-size: 11.7px; color: #d8d8d8; border: 1px solid #3a3a3a; border-left: 0; border-radius: 0 4px 4px 0; }
.vtab.sel { background: #383838; }

/* Node editor */
.editor { margin-top: 4px; }
.edhead { height: 27px; padding-top: 1px; background: #2a2a2a; display: flex; align-items: center; border-radius: 4px 4px 0 0; position: relative; }
.dd { display: flex; align-items: center; justify-content: center; gap: 2px; height: 20px; border: 1px solid #3a3a3a; border-radius: 4px; background: #272727; color: #ddd; }
.dd.type { width: 35px; margin-left: 7px; }
.dd.mode { width: 83px; margin-left: 6px; justify-content: space-between; padding: 0 4px 0 8px; }
.menu { display: flex; margin-left: 13px; gap: 16.5px; width: 226px; color: #d6d6d6; }
.ngroup { display: flex; height: 20px; border-radius: 4px; overflow: hidden; gap: 1px; }
.ng-type { width: 33px; background: #252525; display: flex; align-items: center; justify-content: center; gap: 1px; color: #ddd; border-radius: 4px 0 0 4px; }
.ng-name { width: 80px; background: #1b1b1b; padding-left: 8px; display: flex; align-items: center; }
.ng-btn { width: 22px; background: #545454; display: flex; align-items: center; justify-content: center; color: #cfcfcf; }
.ng-btn.num { width: 25px; }
.ngroup.wide .ng-name { width: 85px; }
.pinicon { margin-left: 8px; color: #aaa; }
.edright { position: absolute; right: 6px; top: 3.5px; display: flex; gap: 7px; }
.hbtn { width: 20px; height: 20px; background: #3a3a3a; border-radius: 4px; display: flex; align-items: center; justify-content: center; }
.hgroup { display: flex; height: 20px; border: 1px solid #383838; border-radius: 4px; overflow: hidden; }
.hseg { width: 21px; display: flex; align-items: center; justify-content: center; gap: 1px; }
.hseg.on { background: #565656; } .hseg.blue { background: #4a70b8; } .hseg.wide2 { width: 33px; } .hseg.narrow { width: 21px; }

.canvas { position: relative; height: 437px; overflow: hidden; border-radius: 0 0 4px 4px; background-color: #1c1c1c; background-image: radial-gradient(circle, #333 0, #333 .8px, transparent 1.2px), radial-gradient(circle, #242424 0, #242424 .6px, transparent 1px); background-size: 92px 92px, 18.4px 18.4px; background-position: -44px -24px, 0 -6px; }
.links { position: absolute; inset: 0; width: 100%; height: 100%; }
.links path { fill: none; stroke: #63c7a2; stroke-width: 2.3; }
.links .yellow { stroke: #9a9a2a; stroke-width: 1.3; }
.node { position: absolute; width: 128px; background: #303030; border-radius: 4px; box-shadow: 0 2px 5px rgba(0,0,0,.45); font-size: 10.2px; color: #d8d8d8; }
.n1 { left: 30px; top: 42px; width: 129px; } .n2 { left: 208px; top: 156px; } .n3 { left: 398px; top: 96px; }
.n4 { left: 600px; top: 132px; } .n5 { left: 847px; top: 92px; } .n6 { left: 4px; top: 290px; }
.nhead { margin: 0; height: 18px; display: flex; align-items: center; gap: 5px; padding-left: 8px; font-size: 10.2px; font-weight: 400; border-radius: 4px 4px 0 0; color: #dcdcdc; white-space: nowrap; overflow: hidden; }
.blue-h { background: #1d2a58; } .green-h { background: #39775f; } .dark-h { background: #242424; }
.nbody { padding: 3px 0 4px; }
.nrow { position: relative; height: 20.5px; display: flex; align-items: center; padding: 0 10px; gap: 8px; }
.nrow.out { justify-content: flex-end; }
.nrow.sp { margin-top: 2.5px; }
.sk { position: absolute; right: -5px; top: 5px; width: 10px; height: 10px; border-radius: 50%; }
.sk.left { left: -5px; right: auto; }
.sk.geo { background: #63c7a2; }
.sk.sel { left: -4px; top: 6px; width: 8px; height: 8px; background: #2a2a2a; border: 2.5px solid #c9a6d6; border-radius: 1px; transform: rotate(45deg); }
.sk.str { background: #6d9eeb; }
.sk.val { background: #c7c729; width: 9px; height: 9px; border-radius: 1px; transform: rotate(45deg); left: -4.5px; top: 5.5px; }
.sk.grey { background: #a1a1a1; } .sk.matl { background: #e67a7a; }
.sk.empty { background: #262626; border: 1px solid #777; }
.sk.multi { left: -5px; right: auto; top: 3px; height: 16px; border-radius: 5px; background: #63c7a2; }
.dds { display: flex; flex-direction: column; gap: 5px; margin: 7px 10px .5px; }
.ndd { height: 18px; background: #272727; border: 1px solid #3a3a3a; border-radius: 4px; display: flex; align-items: center; justify-content: space-between; padding: 0 3px 0 6px; color: #d6d6d6; }
.ninput { margin-left: auto; margin-right: -1px; width: 60px; height: 18px; background: #242424; border-radius: 4px; display: flex; align-items: center; justify-content: center; }
.nfield { flex: 1; height: 18px; background: #545454; border-radius: 4px; display: flex; justify-content: space-between; align-items: center; padding: 0 7px 0 14px; }
.nmat { flex: 1; height: 19px; margin: 0 -1px; background: #262626; border: 1px solid #3a3a3a; border-radius: 4px; display: flex; align-items: center; gap: 5px; padding: 0 3px 0 4px; white-space: nowrap; }
.nmat span { flex: 1; }
.crumbs { position: absolute; left: 79px; top: 16px; display: flex; align-items: center; gap: 10px; font-size: 12px; color: #dadada; }
.crumbs .sepc { margin: 0 -3px 0 5px; color: #ddd; }
.crumbs sub { font-size: 10.5px; line-height: 1; margin: 8px -7px 0 -14px; }
.tools2d { position: absolute; left: 8px; top: 10px; display: flex; flex-direction: column; gap: 7px; }
.tool.solo { height: 37px; border-radius: 4px; border: 1px solid #343434; }
.tool.solo.active { border-color: #4a70b8; }
.collapse { position: absolute; right: -2px; top: 18px; color: #bbb; transform: scaleX(-1); }
.vscroll { position: absolute; right: 1px; top: 10px; width: 3px; height: 263px; background: #3c3c3c; border-radius: 2px; }
.hscroll { position: absolute; left: 404px; bottom: 2px; width: 592px; height: 3px; background: #3c3c3c; border-radius: 2px; }

/* Timeline */
.timeline { position: relative; margin-top: 3px; height: 12px; background: #2b2b2b; display: flex; align-items: flex-start; padding-top: 3px; border-radius: 4px 4px 0 0; overflow: hidden; }
.tl-type { width: 33px; margin-left: 7px; height: 20px; }
.tl-group { display: flex; margin-left: 7px; width: 143px; height: 20px; border: 1px solid #3a3a3a; border-radius: 4px; flex: none; }
.tl-group span { padding-left: 8px; padding-top: 3px; flex: none; }
.tl-group span:first-child { width: 77px; }
.tl-menu { padding-top: 4px; margin-left: 11px; }
.tl-menu + .tl-menu { margin-left: 16px; }
.tl-rec { width: 41px; height: 20px; margin-left: 118px; background: linear-gradient(90deg, #484848 49%, #333 50%); border-radius: 4px; flex: none; }
.tl-play { display: flex; gap: 1px; margin-left: 8px; flex: none; }
.tl-play i { width: 20px; height: 20px; background: #545454; }
.tl-frame { margin-left: 126px; width: 80px; height: 20px; background: #545454; border-radius: 4px; text-align: center; padding-top: 3px; flex: none; }
.tl-clock { margin: 0 4px 0 8px; }
.tl-range { width: 94px; height: 20px; background: #545454; display: flex; justify-content: space-between; padding: 3px 12px; margin-right: 1px; flex: none; }
.tl-range b { font-weight: 400; }

/* Right column */
.side { width: 268px; display: flex; flex-direction: column; }
.outliner { position: relative; width: 264px; height: 212px; background: #282828; padding-top: 5px; overflow: hidden; border-radius: 0 0 6px 6px; }
.orow { height: 21.8px; display: flex; align-items: center; color: #d0d0d0; position: relative; }
.orow.l0 { padding-left: 22px; gap: 8px; }
.orow.l1 { padding-left: 24px; }
.orow.l2 { padding-left: 46px; }
.orow.l3 { padding-left: 68px; }
.orow.l4 { padding-left: 105px; }
.exp { color: #cfcfcf; margin-right: 3px; }
.oi { width: 20px; height: 20px; display: flex; align-items: center; justify-content: center; margin: 0 5px 0 3px; border-radius: 4px; flex: none; }
.oi.hl { background: #4d4d4d; }
.oname { width: 65px; }
.oi.chip { background: #4a4a4a; margin: 0; }
.oname2 { width: 73px; }
.oname3 { width: 45px; }
.modchip { position: absolute; left: 186px; width: 9px; height: 20px; background: #4a4a4a; border-radius: 4px 0 0 4px; overflow: hidden; }
.clip { width: 62px; overflow: hidden; white-space: nowrap; }
.rt { margin-right: 7px; display: flex; align-items: center; gap: 6px; position: absolute; right: 0; }
.chk { width: 12px; height: 12px; margin-right: 1px; background: #eee; color: #222; border-radius: 2px; font-size: 10px; line-height: 12px; text-align: center; }
.treeline { position: absolute; left: 30px; top: 52px; width: 1px; height: 160px; background: #414141; }
.oscroll { position: absolute; left: 8px; top: 208px; width: 215px; height: 2px; background: #3c3c3c; }

.phead { margin-top: 4px; height: 28px; background: #282828; display: flex; align-items: center; position: relative; border-radius: 4px 4px 0 0; }
.dd.ptype { position: absolute; left: 8px; width: 33px; background: #252525; }
.psearch { position: absolute; left: 73px; width: 123px; height: 20px; background: #1d1d1d; border-radius: 4px; display: flex; align-items: center; gap: 6px; padding-left: 5px; color: #666; }
.psearch svg { color: #bbb; }
.dd.pfilter { position: absolute; left: 243px; width: 19px; background: #252525; }
.props { display: flex; height: 505px; width: 266px; }
.ptabs { width: 30px; background: #1e1e1e; display: flex; flex-direction: column; align-items: center; padding-top: 16px; color: #ddd; }
.ptgroup { display: flex; flex-direction: column; align-items: center; gap: 14.5px; padding: 0 0 11px; margin-bottom: 11px; width: 100%; border-bottom: 1px solid #2a2a2a; }
.ptgroup.third { margin-top: 2px; margin-bottom: 10px; }
.ptgroup:last-child { border: 0; }
.ptab-on { width: 28px; height: 30px; margin: -7px 0 -7px 2px; background: #303030; border-radius: 4px 0 0 4px; display: flex; align-items: center; justify-content: center; flex: none; }
.pmain { flex: 1; background: #303030; padding: 0 3px 0 9px; }
.pcrumb { position: relative; height: 38px; display: flex; align-items: center; gap: 10px; color: #d8d8d8; font-size: 12px; }
.pcrumb .i16:first-child { margin-left: 2px; }
.pcrumb .sepc { margin: 0 -3px 0 1px; }
.pinr { position: absolute; right: 3px; color: #aaa; }
.addmod { position: relative; height: 20px; margin: 11px 1px 0 0; padding-left: 20px; background: #545454; border-radius: 4px; display: flex; align-items: center; justify-content: center; color: #dfdfdf; }
.plus { position: absolute; left: 8px; font-size: 16px; line-height: 16px; }
.modpanel { margin-top: 12px; width: 224px; height: 280px; border: 1px solid #4f6d9f; border-radius: 4px; background: #333; padding: 3px 0 0 8px; }
.modhead { position: relative; display: flex; align-items: center; height: 20px; }
.modhead .exp { margin: 0 5px 0 0; }
.mbtns { display: flex; margin-left: 14px; border-radius: 4px; overflow: hidden; }
.mb { width: 21.5px; height: 20px; background: #555; display: flex; align-items: center; justify-content: center; color: #eee; }
.mb.b { background: #4a70b8; } .mb.d { background: #1c1c1c; }
.mx { margin-left: 6px; color: #ddd; }
.modhead .grip { right: 6px; top: 6px; }
.modpanel .ngroup { margin: 13px 9px 0 0; }
.modpanel .ng-name { flex: 1; }
.mprops { margin-top: 8px; display: flex; flex-direction: column; gap: 7.4px; }
.mrow { display: flex; align-items: center; height: 19.6px; }
.mrow label { width: 70px; text-align: right; margin-right: 10px; color: #d0d0d0; white-space: nowrap; }
.mfield { width: 82px; height: 19.6px; background: #545454; border-radius: 4px 0 0 4px; display: flex; align-items: center; justify-content: center; color: #dcdcdc; }
.mattr { width: 21px; height: 19.6px; background: #545454; margin-left: 1px; border-radius: 0 4px 4px 0; display: flex; align-items: center; justify-content: center; }
.mattr.none { background: transparent; }
.mrow:nth-child(5) .mfield, .mrow:nth-child(6) .mfield { border-radius: 4px; }
.mdot { width: 4px; height: 4px; background: #e0e0e0; border-radius: 50%; margin-left: 11px; }
.manage { margin-top: 7px; height: 20px; display: flex; align-items: center; gap: 6px; padding-left: 4px; color: #d0d0d0; font-size: 12px; }

.pbottom { position: relative; margin-top: 5px; height: 9px; width: 266px; background: #282828; overflow: hidden; display: flex; align-items: center; border-radius: 4px 4px 0 0; }
.pbottom .dd.ptype, .pbottom .psearch, .pbottom .dd.pfilter { top: 1px; }
```
